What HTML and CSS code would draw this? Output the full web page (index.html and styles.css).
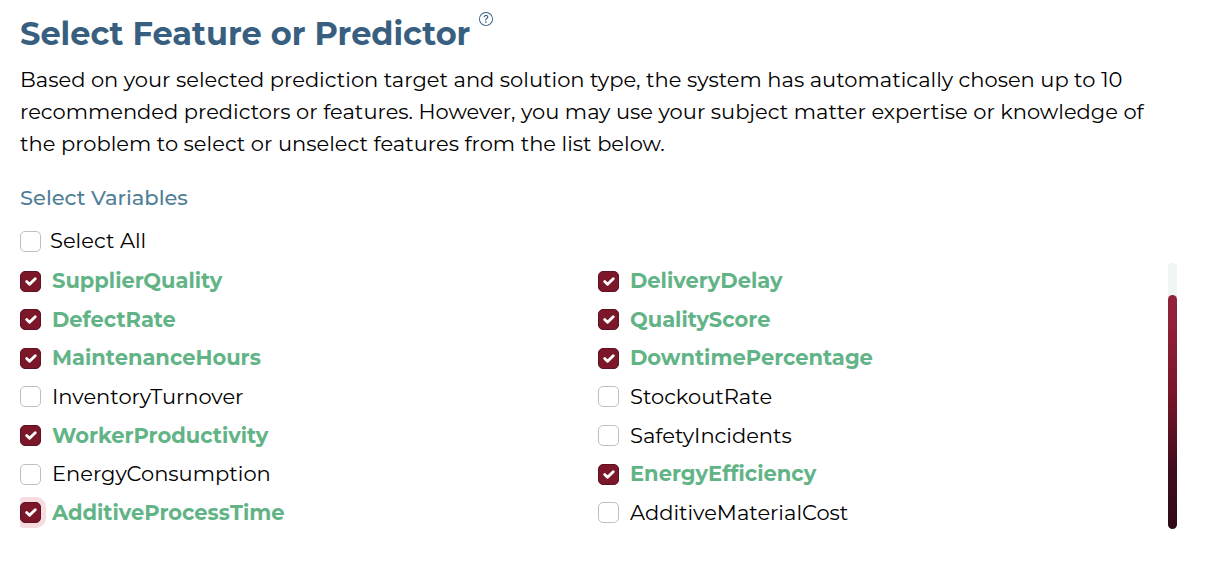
FILE: index.html
```html
<!DOCTYPE html>
<html lang="en">
<head>
    <meta charset="UTF-8">
    <meta name="viewport" content="width=device-width, initial-scale=1.0">
    <title>Select Feature or Predictor</title>
    <link rel="stylesheet" href="styles.css">
</head>
<body>
    <main class="container">
        <header class="heading">
            <h1>Select Feature or Predictor</h1>
            <button type="button" class="help" aria-label="Help">
                <svg viewBox="0 0 16 16" width="14" height="14" fill="currentColor">
                    <path d="M8 15A7 7 0 1 1 8 1a7 7 0 0 1 0 14m0 1A8 8 0 1 0 8 0a8 8 0 0 0 0 16"/>
                    <path d="M5.255 5.786a.237.237 0 0 0 .241.247h.825c.138 0 .248-.113.266-.25.09-.656.54-1.134 1.342-1.134.686 0 1.314.343 1.314 1.168 0 .635-.374.927-.965 1.371-.673.489-1.206 1.06-1.168 1.987l.003.217a.25.25 0 0 0 .25.246h.811a.25.25 0 0 0 .25-.25v-.105c0-.718.273-.927 1.01-1.486.609-.463 1.244-.977 1.244-2.056 0-1.511-1.276-2.241-2.673-2.241-1.267 0-2.655.59-2.75 2.286m1.557 5.763c0 .533.425.927 1.01.927.609 0 1.028-.394 1.028-.927 0-.552-.42-.94-1.029-.94-.584 0-1.009.388-1.009.94"/>
                </svg>
            </button>
        </header>
        <p class="intro">Based on your selected prediction target and solution type, the system has automatically chosen up to 10 recommended predictors or features. However, you may use your subject matter expertise or knowledge of the problem to select or unselect features from the list below.</p>

        <h2>Select Variables</h2>
        <label class="select-all"><input type="checkbox" id="selectAll"><span>Select All</span></label>

        <div class="scroll-area">
            <div class="variables">
                <label><input type="checkbox" checked><span>SupplierQuality</span></label>
                <label><input type="checkbox" checked><span>DeliveryDelay</span></label>
                <label><input type="checkbox" checked><span>DefectRate</span></label>
                <label><input type="checkbox" checked><span>QualityScore</span></label>
                <label><input type="checkbox" checked><span>MaintenanceHours</span></label>
                <label><input type="checkbox" checked><span>DowntimePercentage</span></label>
                <label><input type="checkbox"><span>InventoryTurnover</span></label>
                <label><input type="checkbox"><span>StockoutRate</span></label>
                <label><input type="checkbox" checked><span>WorkerProductivity</span></label>
                <label><input type="checkbox"><span>SafetyIncidents</span></label>
                <label><input type="checkbox"><span>EnergyConsumption</span></label>
                <label><input type="checkbox" checked><span>EnergyEfficiency</span></label>
                <label><input type="checkbox" class="focused" checked><span>AdditiveProcessTime</span></label>
                <label><input type="checkbox"><span>AdditiveMaterialCost</span></label>
            </div>
            <div class="scrollbar"><div class="thumb"></div></div>
        </div>
    </main>
</body>
</html>
```
FILE: styles.css
```css
* {
    box-sizing: border-box;
    margin: 0;
    padding: 0;
}

body {
    font-family: Montserrat, Inter, sans-serif;
    font-size: 21px;
    line-height: 32px;
    color: #000;
    background-color: #fff;
}

.container {
    padding: 12px 28px 40px 20px;
}

.heading {
    display: flex;
    align-items: flex-start;
    gap: 9px;
}

h1 {
    font-size: 32px;
    line-height: 44px;
    font-weight: 700;
    color: #385f80;
}

.help {
    display: flex;
    border: none;
    background: none;
    color: #385f80;
    cursor: pointer;
}

.intro {
    margin-top: 8px;
}

h2 {
    margin-top: 22px;
    font-size: 21px;
    font-weight: 500;
    color: #517f97;
}

label {
    display: flex;
    align-items: center;
    gap: 11px;
    cursor: pointer;
}

.select-all {
    margin-top: 11px;
    gap: 9px;
}

input[type="checkbox"] {
    appearance: none;
    width: 21px;
    height: 21px;
    border: 1px solid #bfbfbf;
    border-radius: 5px;
    background-color: #fff;
}

input[type="checkbox"]:checked {
    border-color: #5c1224;
    background: #7b1729 url("data:image/svg+xml,%3csvg xmlns='http://www.w3.org/2000/svg' viewBox='0 0 20 20'%3e%3cpath fill='none' stroke='%23fff' stroke-linecap='round' stroke-linejoin='round' stroke-width='3' d='m6 10 3 3 6-6'/%3e%3c/svg%3e") center / contain no-repeat;
}

input.focused,
input[type="checkbox"]:focus-visible {
    outline: none;
    box-shadow: 0 0 0 5px #f6dbe0;
}

input:checked + span {
    font-weight: 700;
    color: #62b487;
}

.scroll-area {
    display: flex;
    height: 270px;
    margin-top: 5px;
    overflow: hidden;
}

.variables {
    flex: 1;
    display: grid;
    grid-template-columns: 1fr 1fr;
    grid-auto-rows: 1fr;
    padding-right: 1px;
}

.scrollbar {
    width: 9px;
    margin: 1px 0 3px -9px;
    padding-top: 32px;
    border-radius: 5px;
    background-color: #f0f4f3;
}

.thumb {
    height: 100%;
    border-radius: 5px;
    background: linear-gradient(#93203a 10%, #7b1729 40%, #3f0d1e 75%, #300a18);
}
```
